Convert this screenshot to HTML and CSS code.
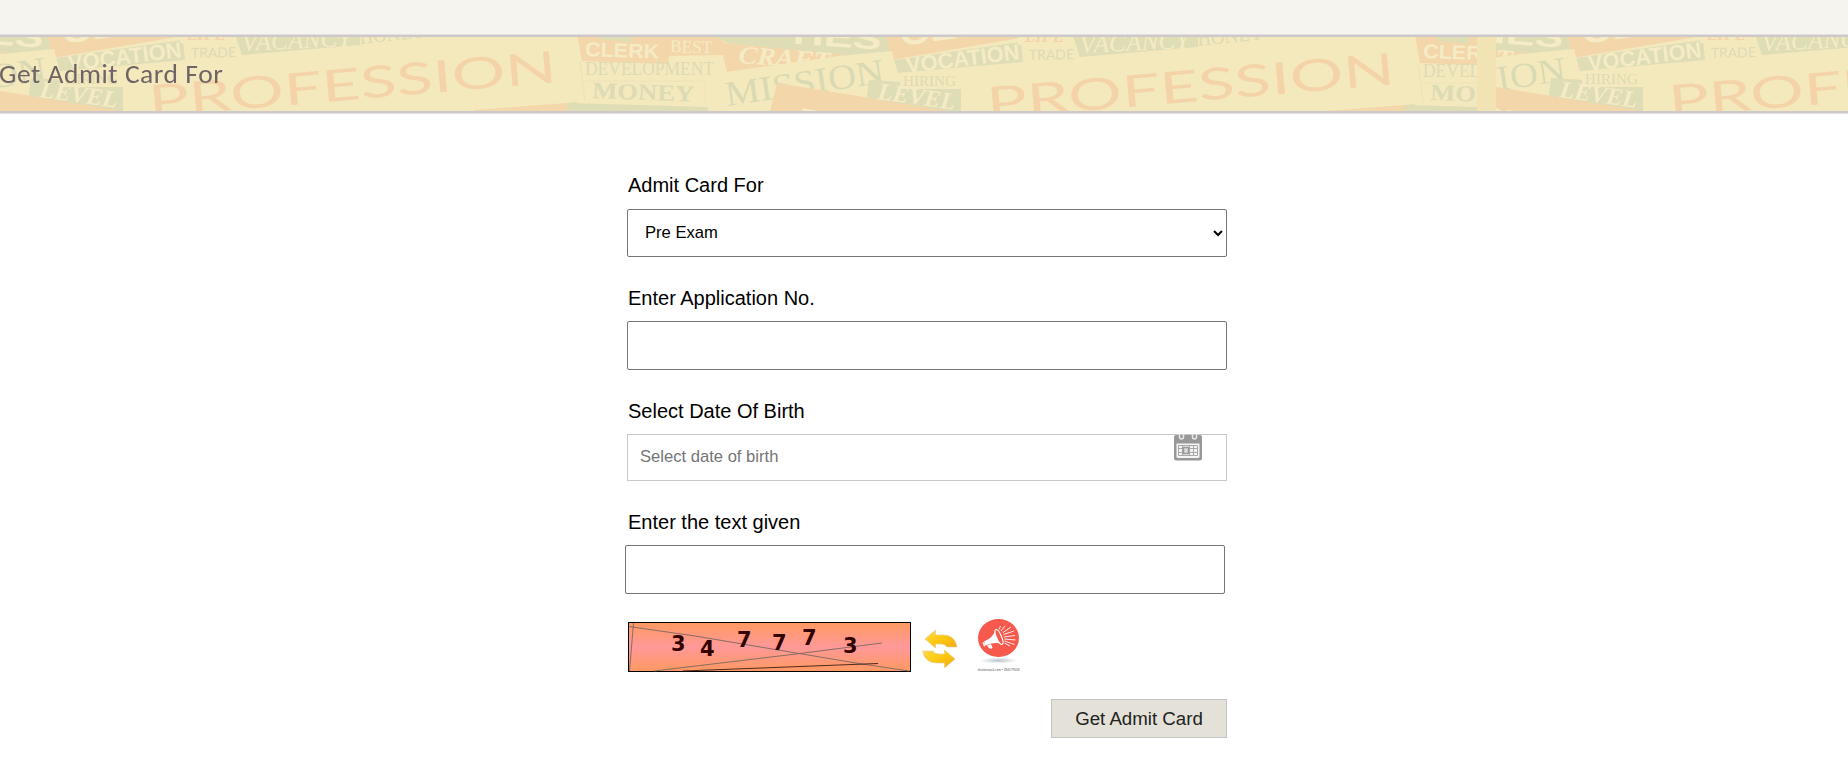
FILE: index.html
```html
<!DOCTYPE html>
<html lang="en">
<head>
    <meta charset="UTF-8">
    <meta name="viewport" content="width=device-width, initial-scale=1.0">
    <title>Get Admit Card</title>
    <link rel="stylesheet" href="styles.css">
</head>
<body>

    <div class="top-bar"></div>

    <div class="banner">
        <svg class="banner-bg" width="1848" height="74" viewBox="0 0 1848 74" aria-hidden="true">
            <defs>
                <clipPath id="tile"><rect x="577" y="-10" width="838" height="100"/></clipPath>
                <clipPath id="strip"><rect x="1415" y="0" width="62" height="74"/></clipPath>
                <clipPath id="end"><rect x="1496" y="0" width="352" height="74"/></clipPath>
                <g id="words" clip-path="url(#tile)">
                    <rect class="cream" x="577" y="-5" width="838" height="90"/>
                    <path class="green" d="M598-4H632V6H598zM571 66 708 70V84H571zM708-4H890V15L850 19 727 6z"/>
                    <path class="orange" d="M577-4H600V2L631 5V-4H710L725 6 846 18 727 35 723 18 669 19 668 27 582 24z"/>
                    <path class="green" d="M869 43 900 45V52H961V80H940L867 61z"/>
                    <path class="orange" d="M777 46 960 76V84H768zM885-4H1020V1L891 23z"/>
                    <path class="green" d="M894 23 1021 5 1023 25 898 36zM1072-4H1198V10L1080 20z"/>
                    <path class="orange" d="M1312 75 1405 68V84H1312z"/>
                    <path class="green" d="M1405 68 1415 67V84H1405z"/>
                    <path class="line" d="M580 25 585 64M584 44H705V66"/>
                    <text class="sans light" x="585" y="19" font-size="20" textLength="74" lengthAdjust="spacingAndGlyphs" transform="rotate(2 585 19)">CLERK</text>
                    <text class="serif light" x="670" y="15" font-size="18" textLength="42" lengthAdjust="spacingAndGlyphs" transform="rotate(2 670 15)">BEST</text>
                    <text class="serif dark" x="585" y="38" font-size="18" textLength="129" lengthAdjust="spacingAndGlyphs">DEVELOPMENT</text>
                    <text class="serif dark bold" x="592" y="61" font-size="23" textLength="102" lengthAdjust="spacingAndGlyphs" transform="rotate(2 592 61)">MONEY</text>
                    <text class="serif light bold italic" x="738" y="26" font-size="25" textLength="92" lengthAdjust="spacingAndGlyphs" transform="rotate(4 738 26)">CRAFT</text>
                    <path class="cream" d="M727 35 850 18 892 14 898 38 870 44 727 66z"/>
                    <text class="sans light" x="785" y="6" font-size="30" textLength="96" lengthAdjust="spacingAndGlyphs" transform="rotate(4 785 6)">TIES</text>
                    <text class="serif mission" x="727" y="69" font-size="35" textLength="160" lengthAdjust="spacingAndGlyphs" transform="rotate(-8.5 727 69)">MISSION</text>
                    <path class="orange" d="M777 46 869 61 960 76V84H768z"/>
                    <path class="green" d="M869 43 900 45V52H961V76L867 61z"/>
                    <text class="sans light" x="797" y="94" font-size="34" transform="rotate(9 797 94)">PE</text>
                    <text class="sans light" x="901" y="9" font-size="34" textLength="85" lengthAdjust="spacingAndGlyphs" transform="rotate(-8 901 9)">CEE</text>
                    <text class="sans light" x="907" y="36" font-size="22" textLength="114" lengthAdjust="spacingAndGlyphs" transform="rotate(-7 907 36)">VOCATION</text>
                    <path class="cream" d="M900 36 958 34V52H900zM1018-4H1071V8H1018z"/>
                    <text class="serif dark" x="903" y="49" font-size="14" textLength="53" lengthAdjust="spacingAndGlyphs">HIRING</text>
                    <text class="serif light bold italic" x="877" y="62" font-size="24" textLength="78" lengthAdjust="spacingAndGlyphs" transform="rotate(8 877 62)">LEVEL</text>
                    <text class="serif peach bold italic" x="1025" y="5" font-size="17" textLength="39" lengthAdjust="spacingAndGlyphs">LIFE</text>
                    <text class="roman dark" x="1029" y="23" font-size="14" textLength="45" lengthAdjust="spacingAndGlyphs" transform="rotate(-1 1029 23)">TRADE</text>
                    <text class="serif light italic" x="1080" y="16" font-size="25" textLength="110" lengthAdjust="spacingAndGlyphs" transform="rotate(-2.5 1080 16)">VACANCY</text>
                    <text class="serif dark" x="1198" y="9" font-size="22" textLength="66" lengthAdjust="spacingAndGlyphs" transform="rotate(-6 1198 9)">HONEY</text>
                    <text class="roman peach" x="988" y="82" font-size="44" textLength="409" lengthAdjust="spacingAndGlyphs" transform="rotate(-4.9 988 82)">PROFESSION</text>
                </g>
            </defs>
            <use href="#words" x="-838" y="-2"/>
            <use href="#words"/>
            <g clip-path="url(#strip)"><use href="#words" x="838" y="2"/></g>
            <g clip-path="url(#end)"><use href="#words" x="682" y="-2"/></g>
        </svg>
        <h1 class="banner-title">Get Admit Card For</h1>
    </div>

    <form class="admit-form" id="admitForm">
        <div class="form-group group-type">
            <label for="exam-type">Admit Card For</label>
            <select id="exam-type">
                <option>Pre Exam</option>
                <option>Main Exam</option>
            </select>
        </div>

        <div class="form-group group-app">
            <label for="app-no">Enter Application No.</label>
            <input type="text" id="app-no">
        </div>

        <div class="form-group group-dob">
            <label for="dob">Select Date Of Birth</label>
            <div class="date-field">
                <input type="text" id="dob" placeholder="Select date of birth">
                <svg class="calendar-icon" width="28" height="27" viewBox="0 0 28 27">
                    <path fill="#989898" d="M0 3Q0 1 2 1H26Q28 1 28 3V24Q28 26.500 25.500 26.500H2.500Q0 26.500 0 24z"/>
                    <path fill="#f3f3f3" d="M2.500 9.500H25.500V22.500Q25.500 24 24 24H4Q2.500 24 2.500 22.500z"/>
                    <path fill="none" stroke="#e8e8e8" stroke-width="1.500" d="M5.500 0V3Q5.500 5 7.500 5T9.500 3V0M18.500 0V3Q18.500 5 20.500 5T22.500 3V0"/>
                    <path fill="none" stroke="#a9a9a9" stroke-width="1" d="M4.500 11.500H23.500V21.500H4.500zM4.500 14.500H23.500M4.500 18.500H23.500M8.500 11.500V21.500M15.500 11.500V21.500M19.500 11.500V21.500"/>
                    <rect x="9.500" y="13.500" width="5" height="6" fill="#ddd" stroke="#999" stroke-width="1.500"/>
                </svg>
            </div>
        </div>

        <div class="form-group group-text">
            <label for="captcha-text">Enter the text given</label>
            <input type="text" id="captcha-text">
        </div>

        <div class="captcha-row">
            <svg class="captcha" width="283" height="50" viewBox="0 0 283 50">
                <defs>
                    <linearGradient id="captchaFill" x1="0" y1="0" x2="0" y2="1">
                        <stop offset="0.050" stop-color="#ff9966"/>
                        <stop offset="0.500" stop-color="#ff9999"/>
                        <stop offset="0.950" stop-color="#ff9966"/>
                    </linearGradient>
                </defs>
                <rect x="0.500" y="0.500" width="282" height="49" fill="url(#captchaFill)" stroke="#000"/>
                <g fill="none" stroke="#7b6861" stroke-width="0.900">
                    <path d="M1 4.500 67 14 168 31 234 42 281 49M26 49 168 32 254 21M5.500 1 1.500 49"/>
                    <path stroke="#3d1c14" d="M55 49 250 41.500"/>
                </g>
                <g class="captcha-digits">
                    <text x="43" y="29">3</text>
                    <text x="72" y="34">4</text>
                    <text x="109" y="25">7</text>
                    <text x="144" y="28">7</text>
                    <text x="174" y="22.500">7</text>
                    <text x="215" y="30.500">3</text>
                </g>
            </svg>
            <svg class="refresh-icon" width="36" height="40" viewBox="0 0 36 40">
                <defs>
                    <linearGradient id="gold" x1="0" y1="0" x2="1" y2="1">
                        <stop offset="0" stop-color="#ffdc4a"/>
                        <stop offset="0.500" stop-color="#fdc70c"/>
                        <stop offset="1" stop-color="#f0a91c"/>
                    </linearGradient>
                </defs>
                <g fill="url(#gold)" stroke="#e6cf93" stroke-width="0.700">
                    <path d="M3 10 13.500 1V6H21Q33 6 35 18H25Q23 15 19 15H13.500V19z"/>
                    <path d="M33 30 22.500 39V34H15Q3 34 .5 22H11Q12 25 17 25H22.500V21z"/>
                </g>
            </svg>
            <svg class="speaker-icon" width="43" height="53" viewBox="0 0 43 53">
                <defs>
                    <radialGradient id="shade">
                        <stop offset="0" stop-color="#b8c4cc"/>
                        <stop offset="1" stop-color="#fff"/>
                    </radialGradient>
                </defs>
                <ellipse cx="21.500" cy="41.500" rx="19" ry="3" fill="url(#shade)"/>
                <ellipse cx="21.500" cy="19" rx="20.500" ry="19" fill="#f7594d"/>
                <path fill="#fff" d="M7 22.500Q16 19 18.500 11L25 25Q18 22.500 8.500 26.500z"/>
                <path fill="#fff" d="M5.500 23.500 7 23 8.500 27 7 27.500zM10 26.500 14 25 15.500 28.500 14 30 12 29z"/>
                <ellipse cx="22" cy="18" rx="2.500" ry="8" fill="#f7594d" stroke="#fff" stroke-width="1.200" transform="rotate(-23 22 18)"/>
                <path stroke="#fff" stroke-width="0.900" d="M22 10.500 23.500 7M24 12 28 7M26 13.500 34 8M26.500 15.500 37 12M27 18 38 16.500M27.500 20 38.500 21M27.500 22 37.500 25.500M27.500 24 33 27"/>
                <text class="speaker-note" x="0.500" y="52" textLength="42" lengthAdjust="spacingAndGlyphs">shutterstock.com • 284179508</text>
            </svg>
        </div>

        <div class="actions">
            <button type="submit">Get Admit Card</button>
        </div>
    </form>

</body>
</html>
```
FILE: styles.css
```css
body {
    margin: 0;
    background-color: #fff;
    color: #000;
    font-family: "Liberation Sans", Arial, sans-serif;
}
.top-bar {
    height: 35px;
    background-color: #f5f4ef;
}
.banner {
    position: relative;
    display: flex;
    height: 74px;
    background-color: #f2e3b4;
    border-top: 2px solid #cdc8ca;
    border-bottom: 2px solid #cdc8ca;
    box-shadow: 0 0 0 1px #e3dfdf;
}
/* word collage behind the title */
.banner-bg {
    position: absolute;
    top: 0;
    left: 0;
    filter: blur(0.4px);
}
.banner-title {
    position: relative;
    margin: 0;
    color: #6f6465;
    font-family: Carlito, "Open Sans", sans-serif;
    font-size: 27.5px;
    font-weight: normal;
    line-height: 73px;
    letter-spacing: 0.55px;
    text-indent: -1px;
    white-space: nowrap;
}
.cream { fill: #f4e8bd; }
.orange { fill: #f4d6ab; }
.green { fill: #dfddb5; }
.light { fill: #f5ebc4; }
.dark { fill: #dddbb4; }
.mission { fill: #d9dab3; }
.peach { fill: #f4d3a9; }
.line {
    fill: none;
    stroke: #ece2b8;
}
.sans {
    font-family: "Liberation Sans", Arial, sans-serif;
    font-weight: bold;
}
.roman { font-family: Lato, sans-serif; }
.serif { font-family: "Liberation Serif", serif; }
.bold { font-weight: bold; }
.italic { font-style: italic; }

.admit-form {
    width: 600px;
    margin-left: 627px;
    padding-top: 60px;
}
.form-group {
    display: flex;
    flex-direction: column;
}
label {
    height: 36px;
    padding-left: 1px;
    font-size: 20px;
    line-height: 25px;
}
select, input {
    box-sizing: border-box;
    width: 600px;
    margin: 0;
    background-color: #fff;
    border: 1px solid #767676;
    border-radius: 2px;
    font-family: inherit;
    font-size: 16.6px;
}
select {
    height: 48px;
    padding: 0 0 2px 13px;
    color: #000;
}
input {
    height: 49px;
    padding: 0 12px;
}
.group-type {
    margin-bottom: 29px;
}
.group-app label,
.group-dob label,
.group-text label {
    height: 35px;
}
.group-app {
    margin-bottom: 29px;
}
.group-dob {
    margin-bottom: 29px;
}
.group-text input {
    margin-left: -2px;
}
.date-field {
    position: relative;
    display: flex;
}
.date-field input {
    height: 47px;
    padding-bottom: 1px;
    border-color: #c8c8c8;
    border-radius: 0;
}
.date-field input::placeholder {
    color: #757575;
}
.calendar-icon {
    position: absolute;
    top: 0;
    right: 25px;
}
.captcha-row {
    display: flex;
    align-items: flex-start;
    height: 55px;
    margin-top: 25px;
    padding-left: 1px;
}
.captcha {
    margin-top: 3px;
}
.captcha-digits {
    fill: #330000;
    font-family: "DejaVu Sans", Verdana, sans-serif;
    font-size: 21px;
    font-weight: bold;
}
.refresh-icon {
    margin: 10px 0 0 11px;
}
.speaker-icon {
    margin-left: 19px;
}
.speaker-note {
    fill: #555;
    font-size: 3.5px;
}
.actions {
    display: flex;
    justify-content: flex-end;
    margin-top: 25px;
}
button {
    width: 176px;
    height: 39px;
    padding: 0;
    background-color: #e3e1d8;
    border: 1px solid #c3c3c3;
    color: #222;
    font-family: inherit;
    font-size: 18.7px;
    cursor: pointer;
}
```
